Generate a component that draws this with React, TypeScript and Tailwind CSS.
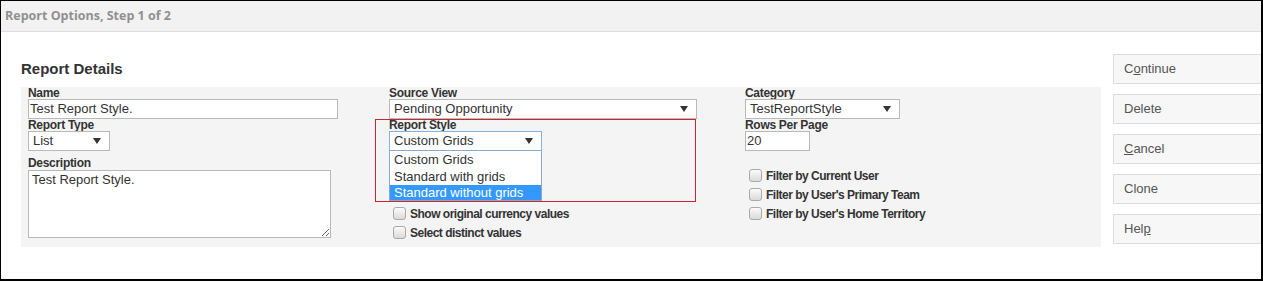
import React from "react";

const Arrow = () => (
  <svg width="8" height="6" viewBox="0 0 8 6" className="shrink-0">
    <path d="M0 0 L8 0 L4 6 Z" fill="#333" />
  </svg>
);

const Label = ({ children }: { children: React.ReactNode }) => (
  <div className="h-[12px] leading-[12px] text-[12px] font-bold text-[#333] tracking-[-0.3px]">{children}</div>
);

const Select = ({ value, w, focus }: { value: string; w: string; focus?: boolean }) => (
  <div
    className={`${w} h-[20px] bg-white border ${focus ? "border-[#7eb4ea]" : "border-[#b9b9b9]"} flex items-center justify-between pl-[4px] pr-[8px] text-[13px] text-[#333]`}
  >
    <span className="leading-[18px]">{value}</span>
    <Arrow />
  </div>
);

const Check = ({ label }: { label: string }) => (
  <div className="h-[19px] flex items-center">
    <span className="w-[13px] h-[13px] rounded-[3px] border border-[#a9a9a9] bg-gradient-to-b from-[#fbfbfb] to-[#dadada] shrink-0" />
    <span className="ml-[4px] text-[12px] font-bold text-[#333] tracking-[-0.5px]">{label}</span>
  </div>
);

const Btn = ({ children }: { children: React.ReactNode }) => (
  <div className="h-[30px] w-[160px] border border-[#dcdcdc] bg-[#f7f7f7] flex items-center pl-[10px] text-[13px] text-[#555]">
    {children}
  </div>
);

export default function App() {
  return (
    <div className="w-[1263px] h-[282px] bg-white overflow-hidden font-['Liberation_Sans',Arial,sans-serif]">
      <div className="relative h-[281px] border-l border-t border-r-2 border-b-2 border-black overflow-hidden">
        <div className="h-[31px] bg-[#f2f2f2] border-b border-[#dedede] flex items-center pl-[4px] text-[12.5px] font-bold text-[#909090] font-['Open_Sans',sans-serif]">
          Report Options, Step 1 of 2
        </div>
        <div className="flex items-start">
          <div className="pl-[20px]">
            <div className="pt-[28px] h-[55px] text-[15px] leading-[18px] font-bold text-[#333]">Report Details</div>
            <div className="relative w-[1080px] h-[160px] bg-[#f4f4f4] px-[7px] flex">
              <div className="w-[361px] flex flex-col">
                <Label>Name</Label>
                <div className="w-[310px] h-[20px] bg-white border border-[#b9b9b9] pl-[1px] text-[13px] leading-[18px] text-[#333]">
                  Test Report Style.
                </div>
                <Label>Report Type</Label>
                <Select value="List" w="w-[82px]" />
                <div className="mt-[6px]">
                  <Label>Description</Label>
                </div>
                <textarea
                  readOnly
                  defaultValue="Test Report Style."
                  className="mt-[1px] w-[303px] h-[68px] bg-white border border-[#b9b9b9] px-[3px] py-0 text-[13px] leading-[17px] text-[#333] outline-none"
                />
              </div>
              <div className="w-[356px] flex flex-col">
                <Label>Source View</Label>
                <Select value="Pending Opportunity" w="w-[308px]" />
                <Label>Report Style</Label>
                <div className="relative">
                  <Select value="Custom Grids" w="w-[153px]" focus />
                  <div className="absolute left-0 top-[19px] w-[153px] border border-[#8aa8cc] bg-white z-10 text-[13px] text-[#333]">
                    <div className="h-[17px] leading-[17px] pl-[4px]">Custom Grids</div>
                    <div className="h-[17px] leading-[17px] pl-[4px]">Standard with grids</div>
                    <div className="h-[15px] leading-[15px] pl-[4px] bg-[#3399ff] text-white">Standard without grids</div>
                  </div>
                </div>
                <div className="mt-[53px] pl-[4px]">
                  <Check label="Show original currency values" />
                  <Check label="Select distinct values" />
                </div>
              </div>
              <div className="flex-1 flex flex-col">
                <Label>Category</Label>
                <Select value="TestReportStyle" w="w-[155px]" />
                <Label>Rows Per Page</Label>
                <div className="w-[65px] h-[20px] bg-white border border-[#b9b9b9] pl-[1px] text-[13px] leading-[18px] text-[#333]">20</div>
                <div className="mt-[15px] pl-[4px]">
                  <Check label="Filter by Current User" />
                  <Check label="Filter by User's Primary Team" />
                  <Check label="Filter by User's Home Territory" />
                </div>
              </div>
              <div className="absolute left-[354px] top-[32px] w-[321px] h-[83px] border border-solid border-[#c9272d] z-20 pointer-events-none" />
            </div>
          </div>
          <div className="ml-[12px] pt-[22px] flex flex-col gap-[10px]">
            <Btn>
              C<span className="underline">o</span>ntinue
            </Btn>
            <Btn>Delete</Btn>
            <Btn>
              <span className="underline">C</span>ancel
            </Btn>
            <Btn>Clone</Btn>
            <Btn>
              Hel<span className="underline">p</span>
            </Btn>
          </div>
        </div>
      </div>
    </div>
  );
}
